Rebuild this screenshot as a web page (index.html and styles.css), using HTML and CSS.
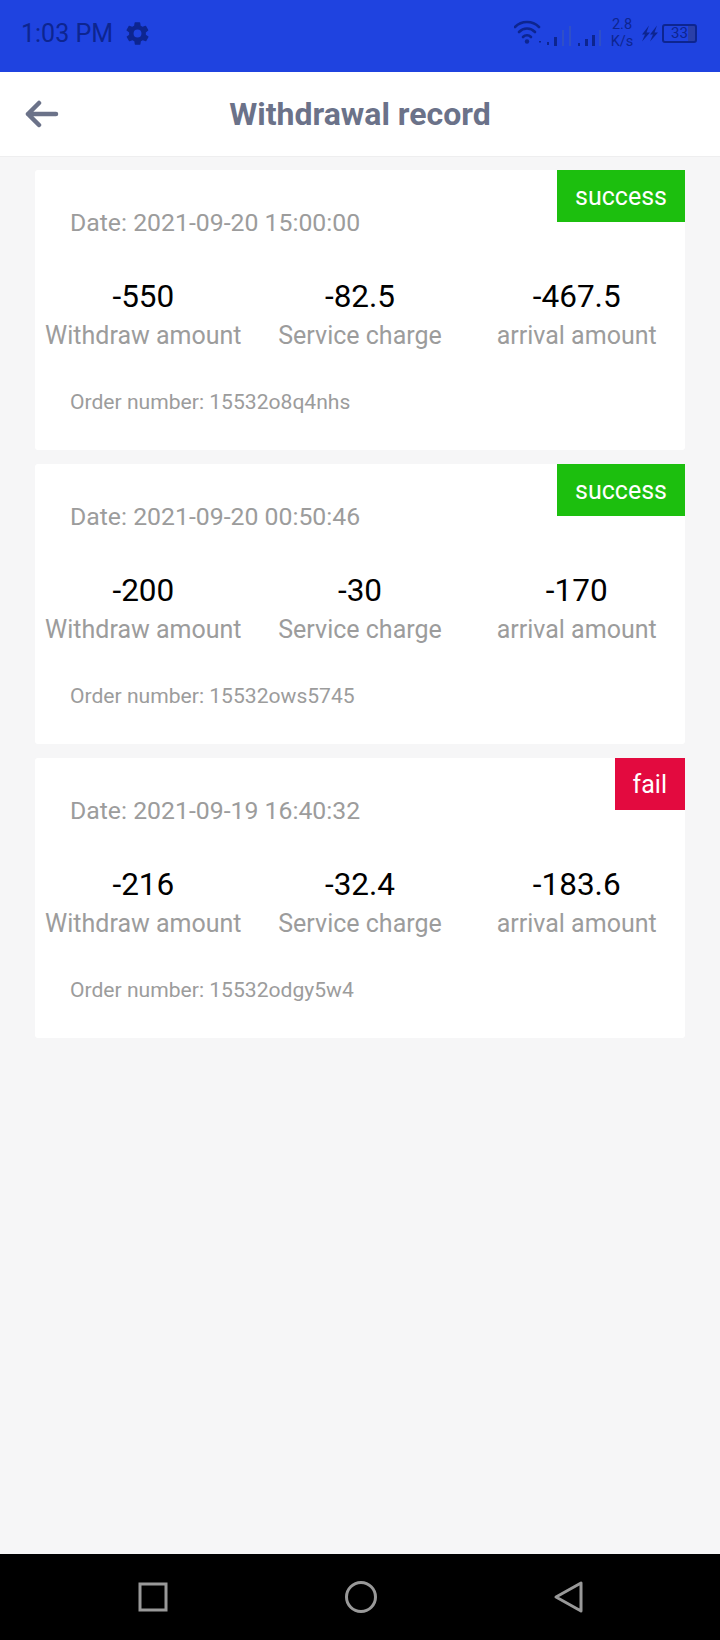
FILE: index.html
```html
<!DOCTYPE html>
<html lang="en">
<head>
<meta charset="utf-8">
<title>Withdrawal record</title>
<link rel="stylesheet" href="styles.css">
</head>
<body>
<div class="screen">
  <header class="status">
    <div class="status-left">
      <span class="time">1:03 PM</span>
      <svg class="gear" viewBox="0 0 24 24"><path fill="#0d2590" d="M19.4 13a7.5 7.5 0 0 0 0-2l2.1-1.6a.5.5 0 0 0 .1-.6l-2-3.5a.5.5 0 0 0-.6-.2l-2.5 1a7.300 7.300 0 0 0-1.700-1l-.4-2.600a.5.5 0 0 0-.5-.4h-4a.5.5 0 0 0-.5.4l-.4 2.600a7.300 7.300 0 0 0-1.700 1l-2.500-1a.5.5 0 0 0-.6.2l-2 3.500a.5.5 0 0 0 .1.600L4.600 11a7.500 7.500 0 0 0 0 2l-2.100 1.600a.5.5 0 0 0-.1.600l2 3.500c.1.200.4.300.6.200l2.500-1c.5.400 1.100.700 1.700 1l.4 2.600c0 .2.200.4.500.4h4c.3 0 .5-.2.500-.4l.4-2.600c.6-.3 1.200-.6 1.700-1l2.500 1c.2.100.5 0 .6-.2l2-3.500a.5.5 0 0 0-.1-.6zM12 15.500a3.500 3.500 0 1 1 0-7 3.500 3.500 0 0 1 0 7z"/></svg>
    </div>
    <div class="status-right">
      <svg class="signals" viewBox="0 0 90 32">
        <g fill="none" stroke="#0d2590" stroke-width="2.600" stroke-linecap="round">
          <path d="M1 10a17 17 0 0 1 24 0"/>
          <path d="M5 15a11 11 0 0 1 16 0"/>
          <path d="M9 20a5.500 5.500 0 0 1 8 0"/>
        </g>
        <circle cx="13" cy="24.500" r="2.200" fill="#0d2590"/>
        <g fill="#0d2590">
          <rect x="25" y="24" width="2" height="1.500"/>
          <rect x="33" y="25" width="2" height="3"/>
          <rect x="40" y="20" width="3" height="9"/>
        </g>
        <g fill="#2f4fc8">
          <rect x="48" y="13" width="2" height="16"/>
          <rect x="55" y="9" width="2" height="20"/>
        </g>
        <g fill="#0d2590">
          <rect x="64" y="26" width="2" height="3"/>
          <rect x="71" y="22" width="3" height="7"/>
          <rect x="78" y="18" width="3" height="11"/>
        </g>
        <rect x="85" y="13" width="2" height="16" fill="#2f4fc8"/>
      </svg>
      <span class="speed">2.8<br>K/s</span>
      <svg class="bolts" viewBox="0 0 18 16"><path fill="#0d2590" d="M8 0 1 9h3l-3 7 8-9H5.500zM16 0 9 9h3l-3 7 8-9h-3.500z"/></svg>
      <span class="battery">33</span>
    </div>
  </header>

  <nav class="topbar">
    <svg class="back" viewBox="0 0 34 28"><path fill="none" stroke="#6b7289" stroke-width="4.500" stroke-linecap="round" stroke-linejoin="round" d="M14 3 3 14l11 11M3 14h28"/></svg>
    <h1 class="title">Withdrawal record</h1>
  </nav>

  <main class="list">
    <article class="card">
      <span class="badge badge-success">success</span>
      <p class="date">Date: 2021-09-20 15:00:00</p>
      <div class="amounts">
        <div class="amount"><strong>-550</strong><span>Withdraw amount</span></div>
        <div class="amount"><strong>-82.5</strong><span>Service charge</span></div>
        <div class="amount"><strong>-467.5</strong><span>arrival amount</span></div>
      </div>
      <p class="order">Order number: 15532o8q4nhs</p>
    </article>
    <article class="card">
      <span class="badge badge-success">success</span>
      <p class="date">Date: 2021-09-20 00:50:46</p>
      <div class="amounts">
        <div class="amount"><strong>-200</strong><span>Withdraw amount</span></div>
        <div class="amount"><strong>-30</strong><span>Service charge</span></div>
        <div class="amount"><strong>-170</strong><span>arrival amount</span></div>
      </div>
      <p class="order">Order number: 15532ows5745</p>
    </article>
    <article class="card">
      <span class="badge badge-fail">fail</span>
      <p class="date">Date: 2021-09-19 16:40:32</p>
      <div class="amounts">
        <div class="amount"><strong>-216</strong><span>Withdraw amount</span></div>
        <div class="amount"><strong>-32.4</strong><span>Service charge</span></div>
        <div class="amount"><strong>-183.6</strong><span>arrival amount</span></div>
      </div>
      <p class="order">Order number: 15532odgy5w4</p>
    </article>
  </main>

  <footer class="sysnav">
    <svg class="sys-icon" viewBox="0 0 34 34"><rect x="4" y="4" width="26" height="26" fill="none" stroke="#999" stroke-width="3"/></svg>
    <svg class="sys-icon" viewBox="0 0 34 34"><circle cx="17" cy="17" r="14.500" fill="none" stroke="#999" stroke-width="3"/></svg>
    <svg class="sys-icon" viewBox="0 0 34 34"><path d="M29 3v28L4 17z" fill="none" stroke="#999" stroke-width="3" stroke-linejoin="round"/></svg>
  </footer>
</div>
</body>
</html>
```
FILE: styles.css
```css
* { box-sizing: border-box; }
html, body { margin: 0; padding: 0; }
body { font-family: Roboto, "Liberation Sans", sans-serif; background: #f6f6f7; }
.screen { width: 720px; height: 1640px; display: flex; flex-direction: column; background: #f6f6f7; }

.status { height: 72px; flex: none; background: #1f43e0; color: #0d2590; display: flex; align-items: center; justify-content: space-between; padding: 0 23px 6px 21px; }
.status-left { display: flex; align-items: center; gap: 11px; }
.time { font-size: 25px; }
.gear { width: 27px; height: 27px; }
.status-right { display: flex; align-items: center; }
.signals { width: 90px; height: 32px; margin-right: 6px; }
.speed { font-size: 14.500px; line-height: 17px; text-align: center; width: 24px; margin-right: 7px; }
.bolts { width: 18px; height: 17px; margin-right: 3px; }
.battery { width: 35px; height: 19px; border: 2px solid #0d2590; border-radius: 3px; font-size: 15px; line-height: 15px; text-align: center; background: linear-gradient(90deg, transparent 76%, #2a3fa8 76%); }

.topbar { height: 85px; flex: none; background: #fff; border-bottom: 1px solid #eeeeef; display: flex; align-items: center; justify-content: center; position: relative; }
.back { position: absolute; left: 25px; top: 28px; width: 34px; height: 28px; }
.title { margin: 0; font-size: 32px; font-weight: 700; color: #6b7289; }

.list { flex: 1; padding: 13px 35px 0; display: flex; flex-direction: column; gap: 14px; }
.card { position: relative; height: 280px; background: #fff; border-radius: 3px; padding: 39px 0 0; }
.badge { position: absolute; top: 0; right: 0; height: 52px; line-height: 54px; padding: 0 18px; color: #fff; font-size: 25px; }
.badge-success { background: #1cbf0e; }
.badge-fail { background: #e30a3f; }
.date { margin: 0; padding-left: 35px; font-size: 24.800px; line-height: 28px; color: #9c9c9c; }
.amounts { display: flex; margin-top: 42px; }
.amount { flex: 1; display: flex; flex-direction: column; align-items: center; }
.amount strong { font-weight: 400; font-size: 31.500px; line-height: 36px; color: #000; }
.amount span { font-size: 25px; line-height: 42px; color: #9c9c9c; }
.order { margin: 33px 0 0; padding-left: 35px; font-size: 21.100px; line-height: 24px; color: #9c9c9c; }

.sysnav { height: 86px; flex: none; background: #000; display: flex; align-items: center; justify-content: space-between; padding: 0 134px 0 136px; }
.sys-icon { width: 34px; height: 34px; }
```
